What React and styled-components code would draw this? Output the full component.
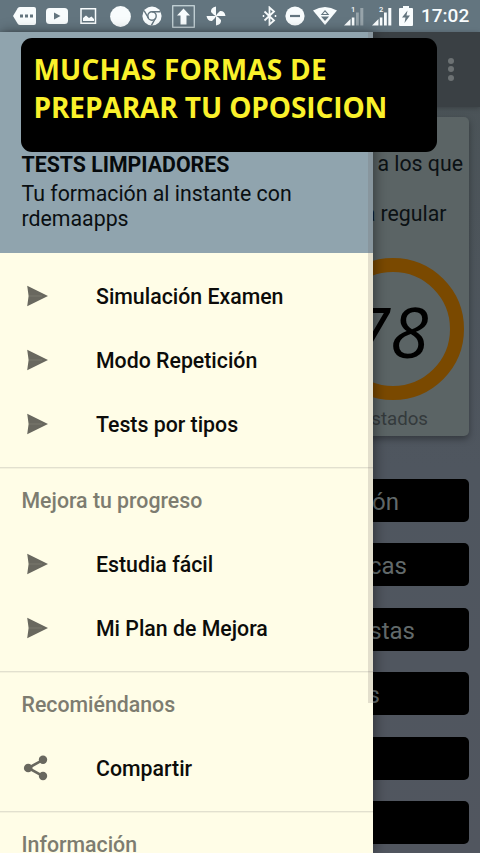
import React from 'react'
import styled, { createGlobalStyle } from 'styled-components'

const GlobalStyle = createGlobalStyle`
* { box-sizing: border-box; }
body {
    margin: 0;
    font-family: Roboto, "Noto Sans", sans-serif;
}
`

const Screen = styled.div`
position: relative;
display: flex;
flex-direction: column;
width: 480px;
height: 853px;
overflow: hidden;
background: linear-gradient(#4a5356, #4f565f 55%, #51565f);
`

const StatusBar = styled.div`
display: flex;
align-items: center;
flex: none;
height: 32px;
padding: 0 11px 0 12.5px;
background-color: #63757f;
color: #f8fcfd;
svg {
    display: block;
    flex: none;
}
`

const Notifications = styled.div`
display: flex;
align-items: center;
gap: 10.8px;
`

const System = styled.div`
display: flex;
align-items: center;
gap: 7.6px;
margin-left: auto;
`

const Clock = styled.span`
width: 48px;
font-size: 19px;
font-weight: 500;
line-height: 32px;
white-space: nowrap;
`

const AppBar = styled.div`
display: flex;
flex: none;
justify-content: flex-end;
height: 75px;
padding: 26px 26px 0 0;
background-color: #3a4044;
box-shadow: 0 1px 5px rgba(0,0,0,0.25);
`

const Overflow = styled.div`
display: flex;
flex-direction: column;
gap: 2.4px;
span {
    width: 6px;
    height: 6px;
    border-radius: 50%;
    background-color: #6c7173;
}
`

const Card = styled.div`
display: flex;
flex: none;
flex-direction: column;
align-items: flex-end;
height: 319px;
margin: 10px 11px 0;
border-radius: 5px;
background-color: #5b6465;
box-shadow: 0 3px 7px rgba(0,0,0,0.35);
`

const CardText = styled.p`
margin: 0;
padding-top: ${({$top}) => $top}px;
padding-right: ${({$right}) => $right}px;
font-size: 21.3px;
line-height: 25px;
color: #0b1114;
`

const Ring = styled.div`
display: flex;
justify-content: center;
align-items: center;
width: 142px;
height: 142px;
margin: 32px 5px 0 0;
padding: 3px 6px 0 0;
border: 14px solid #7a4900;
border-radius: 50%;
font-family: "Open Sans", "Noto Sans", sans-serif;
font-size: 70px;
line-height: 80px;
font-style: italic;
color: #000;
`

const Caption = styled.div`
padding: 7px 41px 0 0;
font-size: 18.7px;
line-height: 25px;
color: #343a3c;
`

const Buttons = styled.div`
display: flex;
flex-direction: column;
gap: 21.4px;
padding: 43px 11px 0;
`

const Button = styled.button`
flex: none;
height: 43px;
padding: 3px ${({$right}) => $right || 0}px 0 0;
border: 0;
border-radius: 5px;
background-color: #000;
font: 24px/40px Roboto, sans-serif;
text-align: right;
color: #626a6b;
`

const Drawer = styled.nav`
position: absolute;
top: 32px;
left: 0;
display: flex;
flex-direction: column;
width: 373.3px;
height: 821px;
background-color: #fffde7;
box-shadow: 2px 0 12px rgba(0,0,0,0.4);
`

const Header = styled.header`
height: 221px;
flex: none;
padding: 120px 21.5px 0;
background-color: #90a4ae;
color: #0a0f12;
`

const Title = styled.div`
font-size: 21.3px;
font-weight: 700;
line-height: 25px;
color: #060a0c;
`

const Subtitle = styled.div`
margin-top: 4px;
font-size: 21.3px;
line-height: 25px;
`

const Group = styled.section`
flex: none;
padding: ${({$first}) => $first ? 11 : 0}px 0 11px;
border-bottom: 1px solid #e2e0cf;
box-shadow: 0 1px #f4f2dd;
`

const GroupTitle = styled.div`
flex: ${({$last}) => $last ? '0 0 41px' : 'none'};
height: 64px;
padding-left: 21.5px;
font-size: 21.3px;
font-weight: 500;
line-height: 65px;
color: #7d7c70;
`

const Item = styled.a`
display: flex;
align-items: center;
height: 64px;
padding-left: 20px;
font-size: 21.3px;
font-weight: 500;
color: #0c0c0a;
svg {
    flex: none;
    margin-right: 44px;
}
`

const Scrollbar = styled.div`
position: absolute;
top: 0;
right: 0;
width: 5.5px;
height: 671px;
background-color: rgba(100,90,90,0.18);
`

const Banner = styled.div`
position: absolute;
top: 38px;
left: 20.5px;
width: 416px;
height: 114px;
padding: 13px;
border-radius: 11px;
background-color: #000;
font-family: "Open Sans", "Noto Sans", sans-serif;
font-size: 28px;
font-weight: 700;
line-height: 37.7px;
white-space: nowrap;
color: #faf12b;
`

const BannerLine = styled.div`
letter-spacing: ${({$spacing}) => $spacing}px;
`

function SendIcon() {
    return (
        <svg width="32" height="32" viewBox="0 0 32 32">
            <path d="M7.2 5.8 28 16 7.2 26.200 8.600 16z" fill="#69685f"/>
            <path d="M9 16H22" stroke="#828176" strokeWidth="0.700"/>
        </svg>
    )
}

function ShareIcon() {
    return (
        <svg width="32" height="32" viewBox="0 0 32 32" fill="#69685f">
            <path d="M23 7.8 8.3 16 23 24.2" fill="none" stroke="#69685f" strokeWidth="2.6"/>
            <circle cx="23" cy="7.8" r="4.2"/>
            <circle cx="8.2" cy="16" r="4.3"/>
            <circle cx="23" cy="24" r="4.2"/>
        </svg>
    )
}

function Signal({sim, weak}) {
    return (
        <svg width="20" height="22" viewBox="0 0 20 22" fill="currentColor">
            <path d="M0 20.5 6.5 14V20.5z"/>
            <path d="M7.8 12.5h2.6v8H7.8z"/>
            <path d="M12 7.5h2.8v13H12zM16.3 3h3v17.5h-3z" opacity={weak ? 0.35 : 1}/>
            <text x="7" y="6.5" fontSize="7.5" fontWeight="500">{sim}</text>
        </svg>
    )
}

function Status() {
    return (
        <StatusBar>
            <Notifications>
                <svg width="23" height="18" viewBox="0 0 23 18">
                    <path d="M7 0H21a2 2 0 0 1 2 2V16a2 2 0 0 1-2 2H7Q5.500 18 4.700 16.800L0 9 4.700 1.200Q5.500 0 7 0z" fill="currentColor"/>
                    <path d="M7 7.500h3v3H7zM12 7.500h3v3h-3zM17 7.500h3v3h-3z" fill="#63757f"/>
                </svg>
                <svg width="22" height="16" viewBox="0 0 22 16">
                    <rect width="22" height="16" rx="3.5" fill="currentColor"/>
                    <path d="M8 4.500 14.500 8 8 11.500z" fill="#63757f"/>
                </svg>
                <svg width="20" height="16" viewBox="0 0 20 16">
                    <rect x="2" y="0.750" width="14.500" height="14.500" fill="none" stroke="currentColor" strokeWidth="1.500"/>
                    <path d="M4 13V10L7 7.500 10 10 12.500 8.500 15 11V13z" fill="currentColor"/>
                </svg>
                <svg width="21" height="21" viewBox="0 0 21 21">
                    <circle cx="10.500" cy="10.500" r="10.400" fill="currentColor"/>
                </svg>
                <svg width="20" height="20" viewBox="0 0 20 20">
                    <circle cx="10" cy="10" r="9.600" fill="currentColor"/>
                    <circle cx="10" cy="10" r="4.200" fill="none" stroke="#63757f" strokeWidth="1.400"/>
                    <path d="M10 5.800H18.500M6.400 12 2.200 4.800M13.600 12 9.400 19.400" fill="none" stroke="#63757f" strokeWidth="1.400"/>
                </svg>
                <svg width="23" height="23" viewBox="0 0 23 23">
                    <rect x="0.750" y="0.750" width="21.500" height="21.500" fill="none" stroke="#cfdde1" strokeWidth="1.200"/>
                    <path d="M11.500 3.500 18 10.500H14.500V19.500H8.500V10.500H5z" fill="currentColor"/>
                </svg>
                <svg width="20" height="20" viewBox="0 0 20 20" fill="currentColor">
                    <path d="M10 10.300V0.500Q4.500 1.500 5 6L7.500 8.500z"/>
                    <path d="M9.700 10H19.500Q18.500 4.500 14 5L11.500 7.500z"/>
                    <path d="M10 9.700V19.500Q15.500 18.500 15 14L12.500 11.500z"/>
                    <path d="M10.300 10H0.500Q1.500 15.500 6 15L8.500 12.500z"/>
                </svg>
            </Notifications>
            <System>
                <svg width="15" height="20" viewBox="0 0 15 20" fill="none" stroke="currentColor" strokeWidth="1.800">
                    <path d="M2.500 5.500 12 14.500 7.500 18.500V1.500L12 5.500 2.500 14.500"/>
                    <path d="M1.500 9v2M13.500 9v2" strokeWidth="1.500"/>
                </svg>
                <svg width="20" height="20" viewBox="0 0 20 20">
                    <circle cx="10" cy="10" r="9.600" fill="currentColor"/>
                    <path d="M5 10H15" stroke="#63757f" strokeWidth="2.200"/>
                </svg>
                <svg width="24" height="20" viewBox="0 0 24 20">
                    <path d="M0 4.500Q12-2.500 24 4.500L12 19z" fill="currentColor"/>
                    <path d="M8.800 8.500 12 4.800 15.200 8.500z" fill="none" stroke="#63757f" strokeWidth="1.100"/>
                    <path d="M8 10.500H16L12 15z" fill="#63757f"/>
                </svg>
                <Signal sim="1" weak/>
                <Signal sim="2"/>
                <svg width="14" height="20" viewBox="0 0 14 20">
                    <path d="M4 0h6v2h3q1 0 1 1V19q0 1-1 1H1q-1 0-1-1V3Q0 2 1 2H4z" fill="currentColor"/>
                    <path d="M8.500 4.500 3 11.500H6.500L5.500 17 11 9.500H7.500z" fill="#63757f"/>
                </svg>
                <Clock>17:02</Clock>
            </System>
        </StatusBar>
    )
}

export default function App() {
    return (
        <Screen>
            <GlobalStyle/>
            <Status/>
            <AppBar>
                <Overflow><span/><span/><span/></Overflow>
            </AppBar>
            <Card>
                <CardText $top={34} $right={6}>a los que</CardText>
                <CardText $top={25} $right={22.5}>a regular</CardText>
                <Ring>78</Ring>
                <Caption>stados</Caption>
            </Card>
            <Buttons>
                <Button $right={70}>ón</Button>
                <Button $right={62}>cas</Button>
                <Button $right={54}>stas</Button>
                <Button $right={89}>s</Button>
                <Button/>
                <Button/>
            </Buttons>
            <Drawer>
                <Header>
                    <Title>TESTS LIMPIADORES</Title>
                    <Subtitle>Tu formación al instante con<br/>rdemaapps</Subtitle>
                </Header>
                <Group $first>
                    <Item><SendIcon/>Simulación Examen</Item>
                    <Item><SendIcon/>Modo Repetición</Item>
                    <Item><SendIcon/>Tests por tipos</Item>
                </Group>
                <Group>
                    <GroupTitle>Mejora tu progreso</GroupTitle>
                    <Item><SendIcon/>Estudia fácil</Item>
                    <Item><SendIcon/>Mi Plan de Mejora</Item>
                </Group>
                <Group>
                    <GroupTitle>Recomiéndanos</GroupTitle>
                    <Item><ShareIcon/>Compartir</Item>
                </Group>
                <GroupTitle $last>Información</GroupTitle>
                <Scrollbar/>
            </Drawer>
            <Banner>
                <BannerLine $spacing={0.22}>MUCHAS FORMAS DE</BannerLine>
                <BannerLine $spacing={-0.1}>PREPARAR TU OPOSICION</BannerLine>
            </Banner>
        </Screen>
    )
}
